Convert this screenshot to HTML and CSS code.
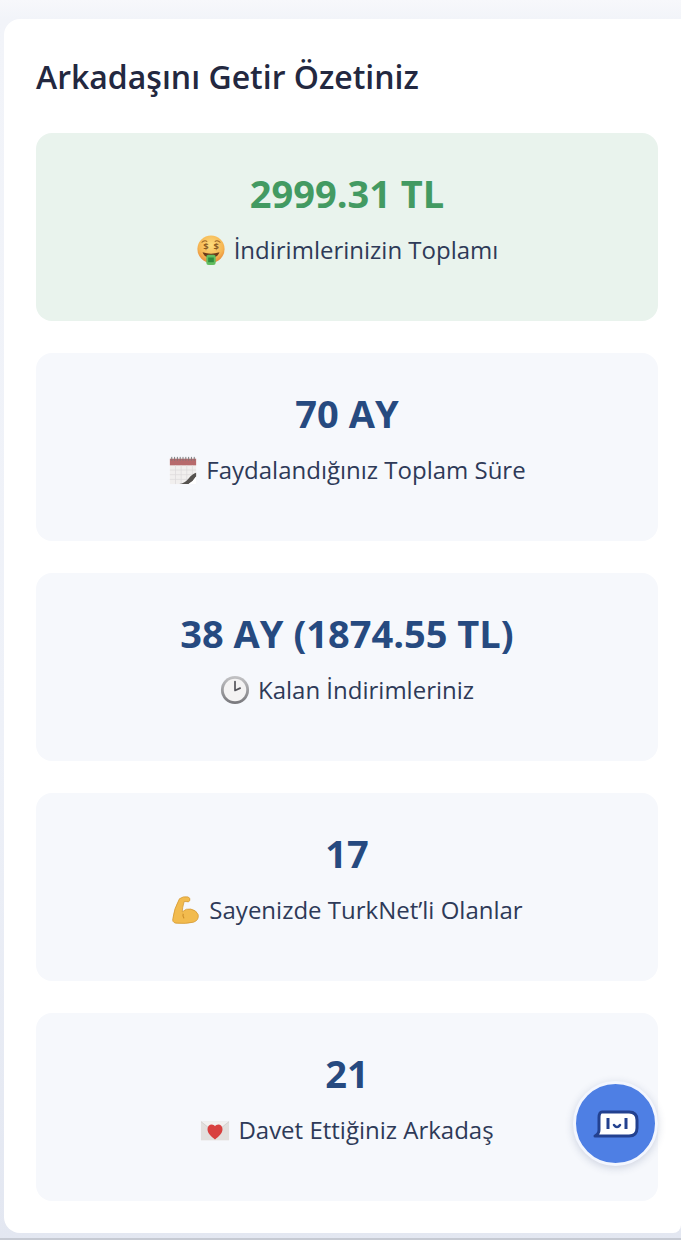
FILE: index.html
```html
<!doctype html>
<html lang="tr">
<head>
	<meta charset="utf-8">
	<meta name="viewport" content="width=device-width, initial-scale=1">
	<title>Arkadaşını Getir Özetiniz</title>
	<link rel="stylesheet" href="styles.css">
</head>
<body>
<main class="summary">
	<h1 class="summary-title">Arkadaşını Getir Özetiniz</h1>

	<section class="tile tile-green">
		<div class="tile-value">2999.31 TL</div>
		<div class="tile-label">
			<svg class="emoji" viewBox="0 0 32 32">
				<defs>
					<radialGradient id="face" cx="50%" cy="35%" r="65%"><stop offset="0" stop-color="#fcdc7c"/><stop offset=".7" stop-color="#f6b552"/><stop offset="1" stop-color="#e78a3a"/></radialGradient>
				</defs>
				<circle cx="16" cy="15" r="14.500" fill="url(#face)"/>
				<path d="M6 8q3-3 6-1M20 7q3-2 6 1" fill="none" stroke="#9a6426" stroke-width="1.100"/>
				<text class="emoji-dollar" x="10.500" y="15.500">$</text>
				<text class="emoji-dollar" x="21.500" y="15.500">$</text>
				<path d="M7 18.500q9 3 18 0q-1.500 5.500-9 5.500t-9-5.500z" fill="#6b3a1a"/>
				<rect x="11" y="21" width="10" height="11" rx="2.500" fill="#62bd5f"/>
				<rect x="13" y="24" width="6" height="5" fill="#2f8a3c"/>
			</svg>
			<span>İndirimlerinizin Toplamı</span>
		</div>
	</section>

	<section class="tile">
		<div class="tile-value">70 AY</div>
		<div class="tile-label">
			<svg class="emoji" viewBox="0 0 32 32">
				<rect x="2" y="3" width="28" height="28" fill="#f1efee"/>
				<rect x="2" y="4" width="28" height="7" fill="#b76a6c"/>
				<path d="M4 2v4M7 2v4M10 2v4M13 2v4M16 2v4M19 2v4M22 2v4M25 2v4M28 2v4" stroke="#77767a" stroke-width="1"/>
				<path d="M2 16h28M2 21h28M2 26h28M8 11v20M14 11v20M20 11v20M26 11v20" stroke="#dcdadb" stroke-width=".8"/>
				<path d="M12 31q6-1 10-6t8-6v4q-3 5-8 8z" fill="#55524f"/>
				<path d="M22 31q5-3 8-8v8z" fill="#fff"/>
			</svg>
			<span>Faydalandığınız Toplam Süre</span>
		</div>
	</section>

	<section class="tile">
		<div class="tile-value">38 AY (1874.55 TL)</div>
		<div class="tile-label">
			<svg class="emoji" viewBox="0 0 32 32">
				<defs>
					<linearGradient id="rim" x1="0" y1="0" x2="0" y2="1"><stop offset="0" stop-color="#c4c4c6"/><stop offset="1" stop-color="#77777b"/></linearGradient>
				</defs>
				<circle cx="16" cy="16" r="15" fill="url(#rim)"/>
				<circle cx="16" cy="16" r="12" fill="#f4f3f3"/>
				<path d="M16 7v9.500l5.500-2.500" fill="none" stroke="#54545a" stroke-width="1.800" stroke-linecap="round" stroke-linejoin="round"/>
			</svg>
			<span>Kalan İndirimleriniz</span>
		</div>
	</section>

	<section class="tile">
		<div class="tile-value">17</div>
		<div class="tile-label">
			<svg class="emoji" viewBox="0 0 32 32">
				<path d="M9 4q4-3 9-2q3 1 2 4q-1 2-4 1l-2 0q-2 7-2 11q4-4 9-3q6 1 8 6q1 6-5 8q-8 2-19 1q-4-1-3-5q1-10 7-21z" fill="#f2bb4e" stroke="#d1952e" stroke-width=".8"/>
				<path d="M13 20q-1 3 1 5" fill="none" stroke="#c98a26" stroke-width="1.100"/>
			</svg>
			<span>Sayenizde TurkNet’li Olanlar</span>
		</div>
	</section>

	<section class="tile">
		<div class="tile-value">21</div>
		<div class="tile-label">
			<svg class="emoji" viewBox="0 0 32 32">
				<rect x="1" y="7" width="30" height="20" fill="#e2dfdd"/>
				<path d="M1 7l15 12L31 7" fill="#f2f0ef" stroke="#c8c5c3" stroke-width=".7"/>
				<path d="M16 26c-4-3-8-6-8-11 0-3 2-5 4.500-5 1.500 0 2.800.8 3.500 2 .7-1.200 2-2 3.500-2 2.500 0 4.500 2 4.500 5 0 5-4 8-8 11z" fill="#d8403f"/>
			</svg>
			<span>Davet Ettiğiniz Arkadaş</span>
		</div>
	</section>
</main>

<button class="chat-button" type="button" aria-label="Canlı destek">
	<svg viewBox="0 0 46 28" width="46" height="28">
		<path d="M9 2h27q8 0 8 8v8q0 8-8 8H2q4-2 4-6v-12q0-6 3-6z" fill="#fff" stroke="#23418f" stroke-width="3" stroke-linejoin="round"/>
		<path d="M15 8v11M33 8v11" stroke="#23418f" stroke-width="3"/>
		<path d="M21 15q3 4 6 0" fill="none" stroke="#23418f" stroke-width="2.500" stroke-linecap="round"/>
	</svg>
</button>
</body>
</html>
```

FILE: styles.css
```css
* {
	box-sizing: border-box;
}

html, body {
	height: 100%;
}

body {
	margin: 0;
	padding: 19px 0 0 4px;
	background: linear-gradient(#f7f8fb, #f2f4f9 19px, #eef1f8 60%, #e3e7f1);
	border-bottom: 2px solid #c6cad3;
	color: #2c3550;
	font-family: "Open Sans", "Liberation Sans", sans-serif;
	overflow: hidden;
}

.summary {
	background: #fff;
	border-radius: 16px 0 8px 16px;
	padding: 32px 23px 32px 32px;
	display: flex;
	flex-direction: column;
	gap: 32px;
}

.summary-title {
	margin: 0 0 -2px;
	height: 52px;
	font-size: 32px;
	line-height: 52px;
	font-weight: 600;
	color: #232840;
}

.tile {
	height: 188px;
	padding-top: 32px;
	background: #f6f8fc;
	border-radius: 16px;
	text-align: center;
}

.tile-green {
	background: #e9f3ed;
}

.tile-value {
	height: 56px;
	font-size: 38px;
	line-height: 56px;
	font-weight: 700;
	color: #264a80;
}

.tile-green .tile-value {
	color: #439a62;
}

.tile-label {
	margin-top: 11px;
	display: flex;
	justify-content: center;
	align-items: center;
	gap: 8px;
	font-size: 24px;
	line-height: 36px;
	color: #2e3a58;
}

.emoji {
	width: 30px;
	height: 30px;
	flex: none;
}

.emoji-dollar {
	font-size: 10px;
	font-weight: 700;
	fill: #8a5a24;
	text-anchor: middle;
}

.chat-button {
	position: absolute;
	left: 573px;
	top: 1081px;
	width: 85px;
	height: 85px;
	padding: 0;
	display: flex;
	justify-content: center;
	align-items: center;
	background: #4e7fe4;
	border: 3px solid #f3f6fe;
	border-radius: 50%;
	box-shadow: 0 2px 8px rgba(40, 60, 110, .2);
}
```
